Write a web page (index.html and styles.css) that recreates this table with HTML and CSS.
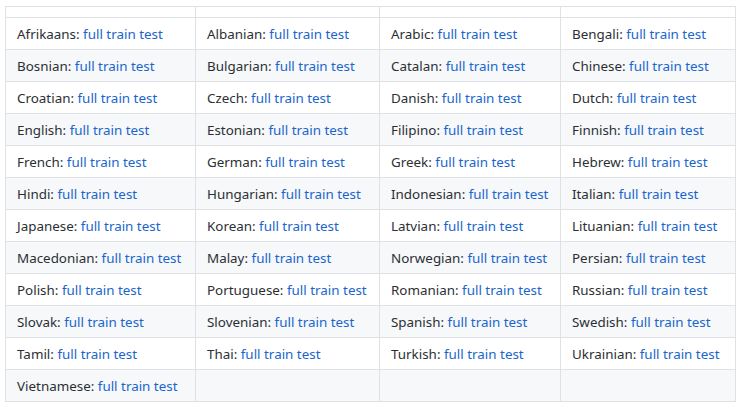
FILE: index.html
```html
<!DOCTYPE html>
<html>
<head>
<meta charset="utf-8">
<link rel="stylesheet" href="styles.css">
</head>
<body>
<table class="langs">
<colgroup><col class="c1"><col class="c2"><col class="c3"><col class="c4"></colgroup>
<thead><tr class="head"><th></th><th></th><th></th><th></th></tr></thead>
<tbody>
<tr><td>Afrikaans: <a href="#">full train test</a></td><td>Albanian: <a href="#">full train test</a></td><td>Arabic: <a href="#">full train test</a></td><td>Bengali: <a href="#">full train test</a></td></tr>
<tr><td>Bosnian: <a href="#">full train test</a></td><td>Bulgarian: <a href="#">full train test</a></td><td>Catalan: <a href="#">full train test</a></td><td>Chinese: <a href="#">full train test</a></td></tr>
<tr><td>Croatian: <a href="#">full train test</a></td><td>Czech: <a href="#">full train test</a></td><td>Danish: <a href="#">full train test</a></td><td>Dutch: <a href="#">full train test</a></td></tr>
<tr><td>English: <a href="#">full train test</a></td><td>Estonian: <a href="#">full train test</a></td><td>Filipino: <a href="#">full train test</a></td><td>Finnish: <a href="#">full train test</a></td></tr>
<tr><td>French: <a href="#">full train test</a></td><td>German: <a href="#">full train test</a></td><td>Greek: <a href="#">full train test</a></td><td>Hebrew: <a href="#">full train test</a></td></tr>
<tr><td>Hindi: <a href="#">full train test</a></td><td>Hungarian: <a href="#">full train test</a></td><td>Indonesian: <a href="#">full train test</a></td><td>Italian: <a href="#">full train test</a></td></tr>
<tr><td>Japanese: <a href="#">full train test</a></td><td>Korean: <a href="#">full train test</a></td><td>Latvian: <a href="#">full train test</a></td><td>Lituanian: <a href="#">full train test</a></td></tr>
<tr><td>Macedonian: <a href="#">full train test</a></td><td>Malay: <a href="#">full train test</a></td><td>Norwegian: <a href="#">full train test</a></td><td>Persian: <a href="#">full train test</a></td></tr>
<tr><td>Polish: <a href="#">full train test</a></td><td>Portuguese: <a href="#">full train test</a></td><td>Romanian: <a href="#">full train test</a></td><td>Russian: <a href="#">full train test</a></td></tr>
<tr><td>Slovak: <a href="#">full train test</a></td><td>Slovenian: <a href="#">full train test</a></td><td>Spanish: <a href="#">full train test</a></td><td>Swedish: <a href="#">full train test</a></td></tr>
<tr><td>Tamil: <a href="#">full train test</a></td><td>Thai: <a href="#">full train test</a></td><td>Turkish: <a href="#">full train test</a></td><td>Ukrainian: <a href="#">full train test</a></td></tr>
<tr><td>Vietnamese: <a href="#">full train test</a></td><td></td><td></td><td></td></tr>
</tbody>
</table>
</body>
</html>
```
FILE: styles.css
```css
html, body {
  margin: 0;
  background: #ffffff;
}
body {
  padding: 6px 0 0 5px;
  font-family: "Noto Sans", "Open Sans", sans-serif;
  font-size: 13.4px;
  color: #2b2f33;
}
.langs {
  border-collapse: collapse;
  table-layout: fixed;
  width: 730px;
}
.c1 { width: 190px; }
.c2 { width: 184px; }
.c3 { width: 181px; }
.c4 { width: 175px; }
.langs th,
.langs td {
  border: 1px solid #dfe2e5;
  padding: 0 11px;
  text-align: left;
  vertical-align: middle;
  white-space: nowrap;
}
.head th {
  height: 10px;
  padding: 0;
}
.langs td {
  height: 31px;
}
.langs tbody tr:nth-child(2n) {
  background: #f6f8fa;
}
.langs a {
  color: #1a66cc;
  text-decoration: none;
}
```
